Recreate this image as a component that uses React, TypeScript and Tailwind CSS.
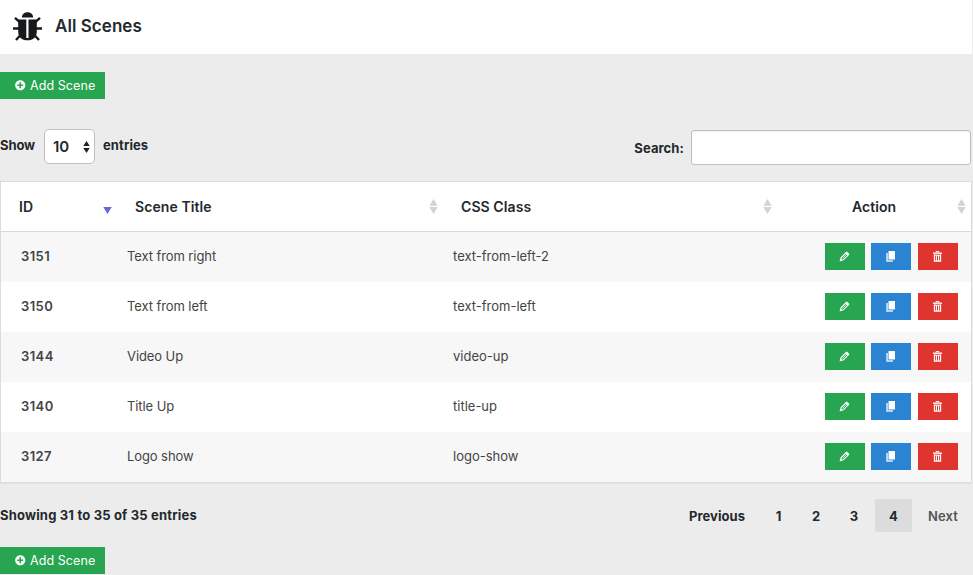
import type { ReactNode } from "react";
import { FaPlusCircle } from "react-icons/fa";

const scenes = [
  { id: 3151, title: "Text from right", css: "text-from-left-2" },
  { id: 3150, title: "Text from left", css: "text-from-left" },
  { id: 3144, title: "Video Up", css: "video-up" },
  { id: 3140, title: "Title Up", css: "title-up" },
  { id: 3127, title: "Logo show", css: "logo-show" },
];

const columns = "grid grid-cols-[116px_326px_334px_194px]";

function BugIcon() {
  return (
    <svg className="ml-3 h-[32px] w-[31px]" viewBox="0 0 31 32" fill="none">
      <path d="M9.800 6.600C9.900 3.300 12.200 1.200 15.500 1.200s5.600 2.100 5.700 5.400z" fill="#17191b" />
      <path d="M6.200 8.500h8.100v18.500h2.200V8.500h8.300v12c0 5.500-3.500 8.800-9.300 8.800s-9.300-3.300-9.300-8.800z" fill="#17191b" />
      <path d="M3 6.800l5 4.500M28 6.800l-5 4.500M1 17.500h6M30 17.500h-6M4 29l5-5.500M27 29l-5-5.500" stroke="#17191b" strokeWidth="2.400" />
    </svg>
  );
}

function PencilIcon() {
  return (
    <svg className="mb-px mr-px h-[11px] w-[11px]" viewBox="0 0 11 11" fill="none" stroke="#fff">
      <path d="M1.500 9.500l.7-2.900 4.500-4.500 2.200 2.200-4.500 4.500z" strokeWidth="1.200" />
      <path d="M3.500 7.500l3.800-3.800" strokeWidth=".8" />
      <path d="M6.600 2l1.300-1.200 2.300 2.300L9 4.400z" fill="#fff" strokeWidth=".6" />
      <path d="M.8 10.200l.4-2.700 2.300 2.300z" fill="#fff" stroke="none" />
    </svg>
  );
}

function CopyIcon() {
  return (
    <svg className="mb-px h-[11px] w-[10px]" viewBox="0 0 10 11" fill="#fff">
      <path d="M2.500 0H9v8.500H2.500z" />
      <path d="M.3 2h1.500v7.200H7v1.500H.3z" opacity=".85" />
    </svg>
  );
}

function TrashIcon() {
  return (
    <svg className="mb-px mr-px h-[11px] w-[9px]" viewBox="0 0 9 11" fill="none" stroke="#fff">
      <path d="M0 2.200h9" strokeWidth="1.300" />
      <path d="M3 1.600V.6h3v1" strokeWidth="1" />
      <path d="M1.500 3.500v6.700h6V3.500" strokeWidth="1.300" />
      <path d="M1 4.200h7M3.500 4v6M5.500 4v6" strokeWidth="1" />
    </svg>
  );
}

function SortArrows() {
  return (
    <svg className="h-[15px] w-[9px]" viewBox="0 0 9 15" fill="#d3d3d3">
      <path d="M4.500 0L8.700 6.700H.3zM.3 8h8.400L4.500 15z" />
    </svg>
  );
}

function AddButton() {
  return (
    <button className="flex h-[27px] w-[105px] items-center bg-[#27a550] pl-[15px] text-[13px] text-white">
      <FaPlusCircle className="mr-[4.500px] h-[10.500px] w-[10.500px]" />
      <span className="whitespace-nowrap pt-px text-[12.500px] tracking-[0.080px]">Add Scene</span>
    </button>
  );
}

function ActionButton({ color, children }: { color: string; children: ReactNode }) {
  return <button className={`flex h-[27px] w-10 items-center justify-center ${color}`}>{children}</button>;
}

export default function App() {
  return (
    <div className="h-[575px] w-[973px] overflow-hidden bg-[#ececec] font-['Inter',sans-serif] text-[13px] text-[#23282d]">
      <header className="flex h-[54px] w-[972px] items-center bg-white">
        <BugIcon />
        <h1 className="mb-0.5 ml-3 text-[17px] font-semibold leading-6 tracking-[0.050px]">All Scenes</h1>
      </header>

      <div className="mt-[18px]">
        <AddButton />
      </div>

      <div className="mt-[30px] flex h-[36px] w-[971px] items-start justify-between font-bold">
        <div className="flex items-center">
          <span className="w-[44px] pb-0.5 tracking-[-0.100px]">Show</span>
          <div className="flex h-[35px] w-[51px] items-center justify-between rounded-[5px] border border-[#bfbfbf] bg-white pl-2 pr-1 text-[15px]">
            <span className="pt-0.5 font-semibold">10</span>
            <svg className="h-3 w-[7px]" viewBox="0 0 7 12" fill="#222">
              <path d="M3.500 0L6.700 5H.3zM.3 7h6.400L3.500 12z" />
            </svg>
          </div>
          <span className="ml-2 pb-0.5 tracking-[0.100px]">entries</span>
        </div>
        <label className="mt-px flex items-center">
          <span className="mr-[7px] pt-0.5 tracking-[0.100px]">Search:</span>
          <input className="h-[35px] w-[280px] rounded-[3px] border border-[#bfbfbf] bg-white shadow-[inset_0_1px_2px_rgba(0,0,0,0.070)]" />
        </label>
      </div>

      <section className="mt-4 w-[972px] border border-[#dcdcdc] bg-white shadow-[0_1px_1px_rgba(0,0,0,0.040)]">
        <div className={`${columns} h-[50px] items-center border-b border-[#d9d9d9] text-[14px] font-semibold`}>
          <div className="flex items-center justify-between pl-[18px] pr-[5px]">
            <span>ID</span>
            <svg className="mt-[7px] h-[7px] w-[9px]" viewBox="0 0 9 7" fill="#6666d8">
              <path d="M.3 0h8.400L4.500 7z" />
            </svg>
          </div>
          <div className="flex items-center justify-between pl-[18px] pr-[5px]">
            <span className="tracking-[0.080px]">Scene Title</span>
            <SortArrows />
          </div>
          <div className="flex items-center justify-between pl-[18px] pr-[5px]">
            <span className="tracking-[0.080px]">CSS Class</span>
            <SortArrows />
          </div>
          <div className="flex items-center justify-between pl-[75px] pr-[5px]">
            <span className="tracking-[0.050px]">Action</span>
            <SortArrows />
          </div>
        </div>
        {scenes.map((s) => (
          <div key={s.id} className={`${columns} h-[50px] items-center text-[#444] odd:bg-white even:bg-[#f7f7f7]`}>
            <span className="pl-5 font-semibold tracking-[0.400px]">{s.id}</span>
            <span className="pl-[10px] tracking-[-0.090px]">{s.title}</span>
            <span className="pl-[10px]">{s.css}</span>
            <div className="flex pb-px pl-12">
              <ActionButton color="bg-[#27a550]"><PencilIcon /></ActionButton>
              <div className="ml-1.5"><ActionButton color="bg-[#2b84d2]"><CopyIcon /></ActionButton></div>
              <div className="ml-[7px]"><ActionButton color="bg-[#e0352f]"><TrashIcon /></ActionButton></div>
            </div>
          </div>
        ))}
      </section>

      <footer className="mt-4 flex h-[33px] w-[972px] items-center justify-between font-bold">
        <span className="tracking-[0.180px]">Showing 31 to 35 of 35 entries</span>
        <nav className="flex h-[33px] items-center">
          <span className="mr-[15px] pt-0.5 tracking-[0.050px]">Previous</span>
          <span className="w-[37px] pt-0.5 text-center">1</span>
          <span className="w-[38px] pt-0.5 text-center">2</span>
          <span className="mr-[2px] w-[38px] pt-0.5 text-center">3</span>
          <span className="flex h-[33px] w-[37px] items-center justify-center rounded-[2px] bg-[#dcdcdc] pt-0.5">4</span>
          <span className="w-[60px] pl-4 pt-0.5 font-semibold tracking-[0.100px] text-[#555]">Next</span>
        </nav>
      </footer>

      <div className="mt-[15px]">
        <AddButton />
      </div>
    </div>
  );
}
